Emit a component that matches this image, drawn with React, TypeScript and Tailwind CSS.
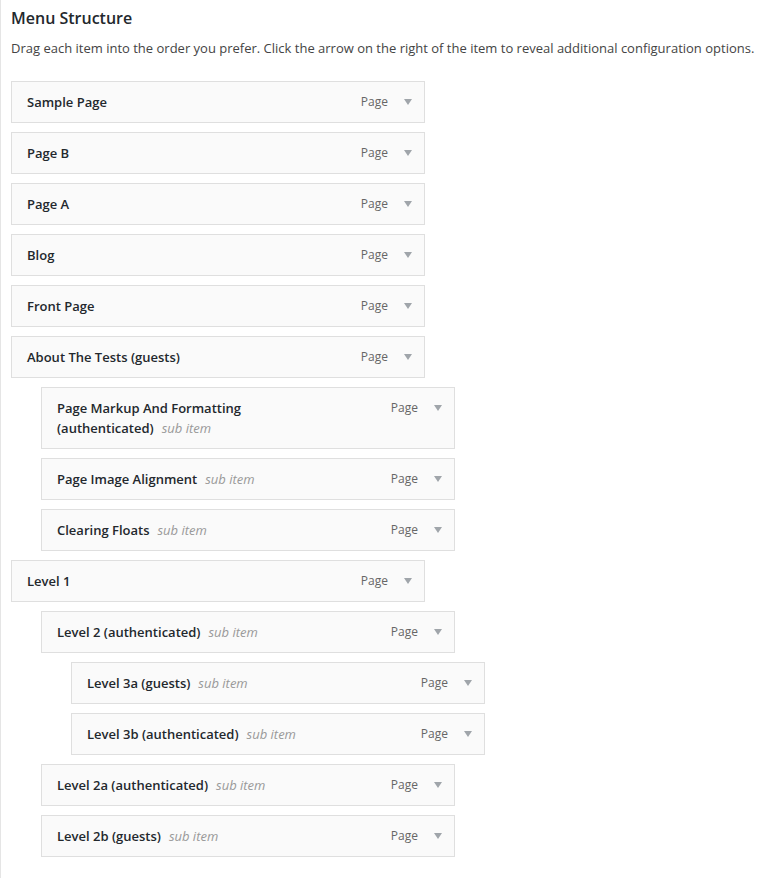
const items: { title: string; depth: number; sub?: boolean }[] = [
  { title: "Sample Page", depth: 0 },
  { title: "Page B", depth: 0 },
  { title: "Page A", depth: 0 },
  { title: "Blog", depth: 0 },
  { title: "Front Page", depth: 0 },
  { title: "About The Tests (guests)", depth: 0 },
  { title: "Page Markup And Formatting (authenticated)", depth: 1, sub: true },
  { title: "Page Image Alignment", depth: 1, sub: true },
  { title: "Clearing Floats", depth: 1, sub: true },
  { title: "Level 1", depth: 0 },
  { title: "Level 2 (authenticated)", depth: 1, sub: true },
  { title: "Level 3a (guests)", depth: 2, sub: true },
  { title: "Level 3b (authenticated)", depth: 2, sub: true },
  { title: "Level 2a (authenticated)", depth: 1, sub: true },
  { title: "Level 2b (guests)", depth: 1, sub: true },
];

const indent = ["ml-0", "ml-[30px]", "ml-[60px]"];

const MenuItem = ({ title, depth, sub }: { title: string; depth: number; sub?: boolean }) => (
  <li className={`mt-[9px] ${indent[depth]}`}>
    <div className="relative w-[414px] border border-[#dfdfdf] bg-[#fafafa] px-[15px] py-[10px]">
      <div className="mr-[169px] text-[13px] font-semibold leading-5 text-[#23282d]">
        <span>{title}</span>
        {sub && <span className="ml-[8px] font-normal italic text-[#999]">sub item</span>}
      </div>
      <div className="absolute right-[12px] top-[10px] flex items-center text-[12px] leading-5 text-[#666]">
        <span>Page</span>
        <svg className="ml-[16px]" width="8" height="6" viewBox="0 0 8 6">
          <path d="M0 0 L8 0 L4 6 Z" fill="#a0a5aa" />
        </svg>
      </div>
    </div>
  </li>
);

export default function App() {
  return (
    <div className="min-h-[878px] bg-white font-['Open_Sans',sans-serif]">
      <div className="min-h-[878px] border-l border-[#e5e5e5] pl-[10px] pt-[6px]">
        <h3 className="text-[16px] font-semibold leading-6 text-[#23282d]">Menu Structure</h3>
        <p className="mt-[8px] text-[13px] leading-5 text-[#444]">
          Drag each item into the order you prefer. Click the arrow on the right of the item to reveal additional
          configuration options.
        </p>
        <ul className="mt-[23px]">
          {items.map((it) => (
            <MenuItem key={it.title} {...it} />
          ))}
        </ul>
      </div>
    </div>
  );
}
